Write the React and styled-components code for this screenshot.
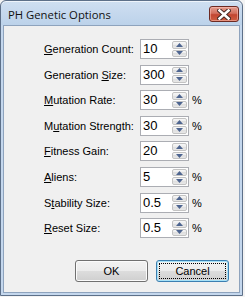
import React from 'react';
import styled, { createGlobalStyle } from 'styled-components';

const GlobalStyle = createGlobalStyle`
  html, body {
    margin: 0;
    padding: 0;
    background: #f3f3f3;
  }
`;

const Window = styled.div`
  box-sizing: border-box;
  width: 243px;
  height: 296px;
  border: 1px solid #5d7089;
  border-radius: 6px 6px 0 0;
  background: linear-gradient(#cfdff1, #bcd2ea 24px, #c4d7ed 24px);
  padding: 0 2px 2px;
  display: flex;
  flex-direction: column;
  box-shadow: inset 0 1px 0 #eef4fb;
`;

const TitleBar = styled.div`
  height: 24px;
  display: flex;
  align-items: center;
  justify-content: space-between;
  padding: 0 1px 0 5px;
`;

const Title = styled.span`
  font-family: "Open Sans", "Noto Sans", sans-serif;
  font-size: 11.3px;
  color: #111;
  padding-top: 3px;
`;

const CloseButton = styled.div`
  box-sizing: border-box;
  width: 30px;
  height: 16px;
  margin-top: 2px;
  border: 1px solid #6d2a22;
  border-radius: 3px;
  background: linear-gradient(#e39e90, #d3705e 45%, #c24631 55%, #cf5f42);
  box-shadow: inset 0 0 0 1px rgba(255, 200, 190, 0.5);
  display: flex;
  align-items: center;
  justify-content: center;
`;

const Client = styled.div`
  flex: 1;
  background: #f0f0f0;
  border: 1px solid #8ea3bd;
  padding: 13px 10px 0 40px;
  display: flex;
  flex-direction: column;
`;

const Form = styled.div`
  display: grid;
  grid-template-columns: 93px 49px auto;
  grid-auto-rows: 20px;
  column-gap: 3px;
  row-gap: 5.6px;
  align-items: center;
  font-family: "Liberation Sans", Arial, sans-serif;
  font-size: 11px;
  color: #000;
`;

const Label = styled.label`
  white-space: nowrap;
  u { text-decoration: underline; text-underline-offset: 1px; }
`;

const Spin = styled.div`
  box-sizing: border-box;
  height: 20px;
  border: 1px solid #abadb3;
  background: #fff;
  display: flex;
  align-items: stretch;
`;

const Value = styled.span`
  flex: 1;
  font-family: "Liberation Sans", Arial, sans-serif;
  font-size: 13px;
  line-height: 18px;
  padding-left: 2px;
`;

const Arrows = styled.div`
  width: 15px;
  display: flex;
  flex-direction: column;
  gap: 1px;
  padding: 1px 1px 1px 0;
`;

const ArrowButton = styled.div`
  flex: 1;
  box-sizing: border-box;
  border: 1px solid #c3c3c3;
  border-radius: 2px;
  background: linear-gradient(#f7f7f7, #ebebeb 50%, #dfdfdf 50%, #e8e8e8);
  display: flex;
  align-items: center;
  justify-content: center;
`;

const Unit = styled.span``;

const Footer = styled.div`
  display: flex;
  justify-content: flex-end;
  gap: 8px;
  margin-top: 22px;
`;

const Button = styled.div`
  box-sizing: border-box;
  width: 73px;
  height: 22px;
  border: 1px solid ${p => (p.$focused ? '#3c7fb1' : '#707070')};
  border-radius: 3px;
  background: linear-gradient(#f2f2f2, #ebebeb 50%, #dddddd 50%, #cfcfcf);
  box-shadow: inset 0 0 0 1px ${p => (p.$focused ? '#a7e2f8' : '#fbfbfb')};
  font-family: "Liberation Sans", Arial, sans-serif;
  font-size: 11px;
  color: #000;
  display: flex;
  align-items: center;
  justify-content: center;
  position: relative;
  ${p => p.$focused && `
    &::after {
      content: '';
      position: absolute;
      inset: 2px;
      border: 1px dotted #000;
    }
  `}
`;

const Arrow = ({ up }) => (
  <svg width="7" height="4" viewBox="0 0 7 4">
    <path d={up ? 'M0 4 L3.5 0 L7 4 Z' : 'M0 0 L3.5 4 L7 0 Z'} fill="#4e6590" />
  </svg>
);

const fields = [
  { pre: '', key: 'G', post: 'eneration Count:', value: '10', unit: '' },
  { pre: 'Generation ', key: 'S', post: 'ize:', value: '300', unit: '' },
  { pre: '', key: 'M', post: 'utation Rate:', value: '30', unit: '%' },
  { pre: 'M', key: 'u', post: 'tation Strength:', value: '30', unit: '%' },
  { pre: '', key: 'F', post: 'itness Gain:', value: '20', unit: '' },
  { pre: '', key: 'A', post: 'liens:', value: '5', unit: '%' },
  { pre: 'S', key: 't', post: 'ability Size:', value: '0.5', unit: '%' },
  { pre: '', key: 'R', post: 'eset Size:', value: '0.5', unit: '%' },
];

export default function App() {
  return (
    <>
      <GlobalStyle />
      <Window>
        <TitleBar>
          <Title>PH Genetic Options</Title>
          <CloseButton>
            <svg width="14" height="11" viewBox="0 0 14 11">
              <path d="M2.5 1.5 L11.5 9.5 M11.5 1.5 L2.5 9.5" stroke="#3d2320" strokeWidth="4.4" strokeLinecap="square" />
              <path d="M2.5 1.5 L11.5 9.5 M11.5 1.5 L2.5 9.5" stroke="#ffffff" strokeWidth="2.6" strokeLinecap="square" />
            </svg>
          </CloseButton>
        </TitleBar>
        <Client>
          <Form>
            {fields.map(f => (
              <React.Fragment key={f.post}>
                <Label>
                  {f.pre}<u>{f.key}</u>{f.post}
                </Label>
                <Spin>
                  <Value>{f.value}</Value>
                  <Arrows>
                    <ArrowButton><Arrow up /></ArrowButton>
                    <ArrowButton><Arrow /></ArrowButton>
                  </Arrows>
                </Spin>
                <Unit>{f.unit}</Unit>
              </React.Fragment>
            ))}
          </Form>
          <Footer>
            <Button>OK</Button>
            <Button $focused>Cancel</Button>
          </Footer>
        </Client>
      </Window>
    </>
  );
}
